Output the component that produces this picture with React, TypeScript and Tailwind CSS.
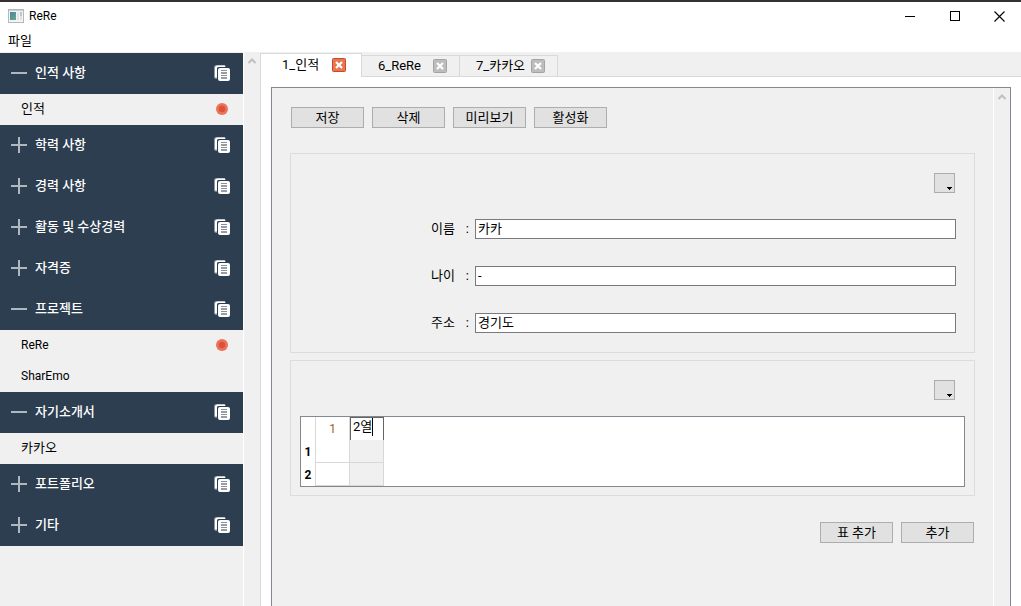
import React, { useState } from "react";

type Section = { title: string; open: boolean; items: { name: string; active?: boolean }[] };

const sections: Section[] = [
  { title: "인적 사항", open: true, items: [{ name: "인적", active: true }] },
  { title: "학력 사항", open: false, items: [] },
  { title: "경력 사항", open: false, items: [] },
  { title: "활동 및 수상경력", open: false, items: [] },
  { title: "자격증", open: false, items: [] },
  { title: "프로젝트", open: true, items: [{ name: "ReRe", active: true }, { name: "SharEmo" }] },
  { title: "자기소개서", open: true, items: [{ name: "카카오" }] },
  { title: "포트폴리오", open: false, items: [] },
  { title: "기타", open: false, items: [] },
];

const fields = [
  { id: "name", label: "이름", value: "카카" },
  { id: "age", label: "나이", value: "-" },
  { id: "address", label: "주소", value: "경기도" },
];

function AppIcon() {
  return (
    <svg width="16" height="14" viewBox="0 0 16 14" aria-hidden="true">
      <defs>
        <linearGradient id="screen" x1="0" y1="0" x2="1" y2="1">
          <stop offset="0" stopColor="#4f7fae" />
          <stop offset="1" stopColor="#5fae7e" />
        </linearGradient>
      </defs>
      <rect x="0.5" y="0.5" width="15" height="13" fill="#f4f4f4" stroke="#b4b7bd" />
      <rect x="1" y="1" width="14" height="1" fill="#c9ccd2" />
      <rect x="2" y="3" width="6" height="8" fill="url(#screen)" />
      <rect x="9" y="3" width="2" height="8" fill="#e2e4e6" />
      <rect x="12" y="3" width="2" height="4" fill="#a9cfc0" />
      <rect x="12" y="7" width="2" height="4" fill="#dfe3e6" />
    </svg>
  );
}

function CopyIcon() {
  return (
    <svg width="16" height="16" viewBox="0 0 16 16" aria-hidden="true">
      <rect x="0" y="0" width="12" height="14" rx="2.5" fill="#8c97a2" />
      <path d="M1 12.5V3Q1 0.5 3.5 0.5H11V2H4.500Q3 2 3 3.500V12.500Z" fill="#fff" />
      <rect x="3" y="2" width="13" height="14" rx="2" fill="#2c3e50" />
      <rect x="4" y="3" width="12" height="13" rx="2" fill="#fff" />
      <path d="M7 5.500h6M7 10.500h6" stroke="#8590a0" />
      <path d="M7 8h6M7 13h6" stroke="#2c3e50" strokeWidth="1.1" />
    </svg>
  );
}

function ToggleIcon({ open }: { open: boolean }) {
  return (
    <svg width="16" height="16" viewBox="0 0 16 16" aria-hidden="true">
      <path d="M0 8h16" stroke="#b0b8bf" strokeWidth="2" />
      {!open && <path d="M8 0v16" stroke="#b0b8bf" strokeWidth="2" />}
    </svg>
  );
}

function CloseIcon({ active }: { active: boolean }) {
  return (
    <svg width="14" height="14" viewBox="0 0 14 14" aria-hidden="true">
      <rect x="0.5" y="0.5" width="13" height="13" rx="1" fill={active ? "#e2794f" : "#bdbdbd"} stroke={active ? "#d9412f" : "#a3a3a3"} />
      <path d="M4 4l6 6M10 4l-6 6" stroke="#fff" strokeWidth="2.2" />
    </svg>
  );
}

function ScrollTrack() {
  return (
    <div className="w-[17px] shrink-0 border-l border-white bg-[#f0f0f0] pt-1.5 pl-1" aria-hidden="true">
      <svg width="8" height="6" viewBox="0 0 8 6">
        <path d="M0.5 5L4 1.5L7.5 5" fill="none" stroke="#bfbfbf" strokeWidth="2" />
      </svg>
    </div>
  );
}

function PushButton({ children }: { children: React.ReactNode }) {
  return (
    <button type="button" className="h-[21px] w-[73px] border border-[#adadad] bg-[#e1e1e1] text-center leading-[18px]">
      {children}
    </button>
  );
}

function MenuButton({ label }: { label: string }) {
  return (
    <button type="button" aria-label={label} aria-haspopup="menu" className="flex h-5 w-[21px] items-end justify-end border border-[#adadad] bg-[#e1e1e1] pr-0.5 pb-0.5">
      <svg width="5" height="3" viewBox="0 0 5 3" aria-hidden="true">
        <path d="M0 0h5v1H4v1H3v1H2V2H1V1H0z" fill="#000" />
      </svg>
    </button>
  );
}

function Sidebar() {
  const [openState, setOpenState] = useState(sections.map((s) => s.open));
  return (
    <nav className="w-[243px] shrink-0 pt-px">
      {sections.map((s, i) => (
        <section key={s.title}>
          <div className="flex h-[41px] items-center justify-between bg-[#2c3e50] pr-[13px] pb-px pl-[11px] text-white">
            <button
              type="button"
              aria-expanded={openState[i]}
              onClick={() => setOpenState(openState.map((o, n) => (n === i ? !o : o)))}
              className="flex items-center gap-2 font-medium"
            >
              <ToggleIcon open={openState[i]} />
              <span>{s.title}</span>
            </button>
            <button type="button" aria-label={`${s.title} 복사`}>
              <CopyIcon />
            </button>
          </div>
          {openState[i] &&
            s.items.map((item) => (
              <a key={item.name} href="#" className="flex h-[31px] items-center justify-between pr-[15px] pb-px pl-[21px]">
                <span className={/^[A-Z]/.test(item.name) ? "text-xs" : ""}>{item.name}</span>
                {item.active && (
                  <svg width="12" height="12" viewBox="0 0 12 12" aria-hidden="true">
                    <circle cx="6" cy="6" r="6" fill="#ec7357" />
                    <circle cx="6" cy="6" r="3.2" fill="#dd5138" />
                  </svg>
                )}
              </a>
            ))}
        </section>
      ))}
    </nav>
  );
}

function Tabs() {
  return (
    <div className="flex h-[25px] items-end" role="tablist">
      <div className="flex h-6 w-[102px] items-center justify-between border-t border-r border-l border-[#d9d9d9] bg-white pr-[15px] pb-0.5 pl-[21px]">
        <button type="button" role="tab" aria-selected="true">1_인적</button>
        <button type="button" aria-label="1_인적 닫기"><CloseIcon active /></button>
      </div>
      {["6_ReRe", "7_카카오"].map((name) => (
        <div key={name} className="flex h-[22px] w-[98px] items-center justify-between border-t border-r border-b border-[#d9d9d9] pr-3 pl-4">
          <button type="button" role="tab" aria-selected="false">{name}</button>
          <button type="button" aria-label={`${name} 닫기`}><CloseIcon active={false} /></button>
        </div>
      ))}
      <div className="h-[22px] flex-1 border-b border-[#d9d9d9]" />
    </div>
  );
}

function DataTable() {
  return (
    <div className="mt-4 border border-[#828790] bg-white">
      <table className="w-[83px] table-fixed border-separate border-spacing-0">
        <colgroup>
          <col className="w-[15px]" />
          <col className="w-[34px]" />
          <col className="w-[34px]" />
        </colgroup>
        <thead>
          <tr className="h-[23px]">
            <td className="border-r border-[#d8d8d8] p-0" />
            <th scope="col" className="border-r border-[#d8d8d8] p-0 text-xs font-normal text-[#a85a14]">1</th>
            <th scope="col" className="p-0 font-normal">
              <div className="flex h-[23px] border-t border-r border-l border-[#646464] pl-0.5">
                <input aria-label="열 이름" defaultValue="2열" className="h-[18px] w-5 border-r border-black bg-white p-0 outline-none" />
              </div>
            </th>
          </tr>
        </thead>
        <tbody>
          {[1, 2].map((n) => (
            <tr key={n} className="h-[23px]">
              <th scope="row" className="border-r border-[#d8d8d8] p-0 text-xs font-bold">{n}</th>
              <td className="border-r border-b border-[#d8d8d8] p-0" />
              <td className="border-r border-b border-[#d8d8d8] bg-[#f0f0f0] p-0" />
            </tr>
          ))}
        </tbody>
      </table>
    </div>
  );
}

export default function App() {
  return (
    <div className="flex min-h-screen flex-col border-t-2 border-[#333132] bg-white font-['Roboto','Noto_Sans_CJK_KR',sans-serif] text-[13px] leading-5 text-black">
      <header className="flex h-7 items-center justify-between pl-2">
        <div className="flex items-center gap-[5px] text-xs">
          <AppIcon />
          <h1>ReRe</h1>
        </div>
        <div className="flex">
          <button type="button" aria-label="최소화" className="flex h-7 w-[45px] items-center justify-center">
            <svg width="10" height="10" viewBox="0 0 10 10"><path d="M0 5.5h10" stroke="#000" /></svg>
          </button>
          <button type="button" aria-label="최대화" className="flex h-7 w-[45px] items-center justify-center">
            <svg width="10" height="10" viewBox="0 0 10 10"><rect x="0.5" y="0.5" width="9" height="9" fill="none" stroke="#000" /></svg>
          </button>
          <button type="button" aria-label="닫기" className="flex h-7 w-11 items-center justify-center">
            <svg width="11" height="11" viewBox="0 0 11 11"><path d="M0.5 0.5l10 10M10.5 0.5L0.5 10.5" stroke="#000" strokeWidth="1.1" /></svg>
          </button>
        </div>
      </header>
      <div className="flex h-[22px] items-center pl-2">
        <button type="button">파일</button>
      </div>
      <div className="flex flex-1 bg-[#f0f0f0]">
        <Sidebar />
        <ScrollTrack />
        <main className="flex min-w-0 flex-1 flex-col">
          <Tabs />
          <div className="flex flex-1 border-l border-[#d9d9d9] bg-white px-2.5 pt-2.5">
            <div className="flex min-w-0 flex-1 border-t border-r border-l border-[#828790] bg-[#f0f0f0]">
              <div className="min-w-0 flex-1 px-[18px] pt-[19px]">
                <div className="flex gap-2 pl-px">
                  <PushButton>저장</PushButton>
                  <PushButton>삭제</PushButton>
                  <PushButton>미리보기</PushButton>
                  <PushButton>활성화</PushButton>
                </div>
                <section className="mt-[25px] border border-[#dcdcdc] py-[19px] pr-[18px] pl-[140px]">
                  <div className="flex justify-end pr-px">
                    <MenuButton label="항목 메뉴" />
                  </div>
                  <div className="mt-[26px] flex flex-col gap-[27px]">
                    {fields.map((f) => (
                      <div key={f.id} className="flex h-5 items-center">
                        <label htmlFor={f.id} className="flex w-11 shrink-0 justify-between pr-1.5">
                          <span>{f.label}</span>
                          <span>:</span>
                        </label>
                        <input id={f.id} defaultValue={f.value} className="h-5 min-w-0 flex-1 border border-[#7a7a7a] bg-white px-0.5 outline-none" />
                      </div>
                    ))}
                  </div>
                </section>
                <section className="mt-[7px] border border-[#dcdcdc] px-[9px] pt-[19px] pb-2">
                  <div className="flex justify-end pr-2.5">
                    <MenuButton label="표 메뉴" />
                  </div>
                  <DataTable />
                </section>
                <div className="mt-[26px] flex justify-end gap-2 pr-px">
                  <PushButton>표 추가</PushButton>
                  <PushButton>추가</PushButton>
                </div>
              </div>
              <ScrollTrack />
            </div>
          </div>
        </main>
      </div>
    </div>
  );
}
